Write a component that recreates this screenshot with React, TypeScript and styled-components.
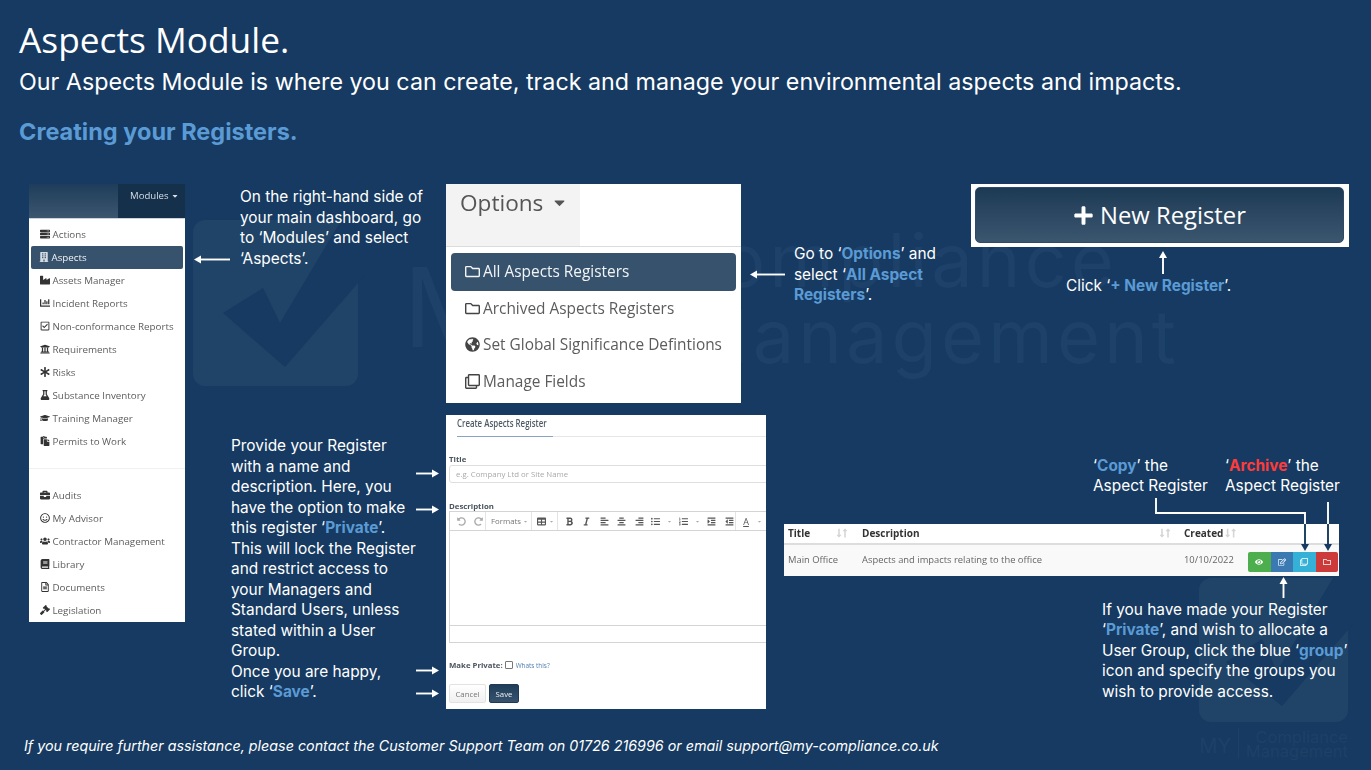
import styled, { createGlobalStyle } from "styled-components";
import type { ReactNode } from "react";
import {
  FaAlignCenter,
  FaAlignLeft,
  FaAlignRight,
  FaAsterisk,
  FaBold,
  FaBook,
  FaBriefcase,
  FaCaretDown,
  FaEye,
  FaFlask,
  FaGavel,
  FaGlobeAmericas,
  FaGraduationCap,
  FaIndent,
  FaIndustry,
  FaItalic,
  FaListOl,
  FaListUl,
  FaLongArrowAltDown,
  FaLongArrowAltUp,
  FaOutdent,
  FaPaste,
  FaPlus,
  FaRedoAlt,
  FaRegCheckSquare,
  FaRegClone,
  FaRegEdit,
  FaRegFileAlt,
  FaRegFolder,
  FaRegSmile,
  FaServer,
  FaTable,
  FaUndoAlt,
  FaUniversity,
  FaUsers,
  FaChartBar,
  FaBuilding,
} from "react-icons/fa";

const GlobalStyle = createGlobalStyle`
  html, body {
    margin: 0;
    padding: 0;
    background: #163a61;
  }
`;

const Slide = styled.div`
  position: relative;
  isolation: isolate;
  width: 1371px;
  height: 770px;
  overflow: hidden;
  background: #163a61;
  color: #fff;
  font-family: Inter, "Liberation Sans", sans-serif;
`;

/* ---- background watermark ---- */
const MarkSvg = styled.svg`
  position: absolute;
  left: 0;
  top: 0;
  z-index: -1;
`;
const WatermarkLine = styled.div<{ $right: number; $y: number; $size: number; $spacing?: number }>`
  position: absolute;
  z-index: -1;
  right: ${(p) => p.$right}px;
  top: ${(p) => p.$y}px;
  font-size: ${(p) => p.$size}px;
  letter-spacing: ${(p) => p.$spacing ?? 0}px;
  line-height: 1;
  white-space: nowrap;
  color: #1d4168;
`;
const WatermarkDivider = styled.div`
  position: absolute;
  z-index: -1;
  left: 1238px;
  top: 728px;
  width: 1px;
  height: 30px;
  background: #1d4168;
`;

/* ---- header ---- */
const Header = styled.header`
  height: 184px;
  padding: 18px 0 0 19px;
  box-sizing: border-box;
`;
const Title = styled.h1`
  margin: 0;
  font-size: 35.3px;
  font-weight: 400;
  line-height: 42px;
  font-family: "Open Sans", sans-serif;
`;
const Subtitle = styled.p`
  margin: 1px 0 0;
  font-size: 23.28px;
  font-weight: 400;
  line-height: 42px;
`;
const SectionHeading = styled.h2`
  margin: 13px 0 0;
  font-size: 23.5px;
  font-weight: 700;
  line-height: 32px;
  color: #5b9bd5;
`;

/* ---- layout ---- */
const Board = styled.main`
  display: grid;
  grid-template-columns: 156px 261px 320px 605px;
  padding-left: 29px;
  height: 525px;
`;
const Column = styled.div`
  display: flex;
  flex-direction: column;
  align-items: flex-start;
`;
const Note = styled.p<{ $left?: number; $top?: number; $width?: number }>`
  margin: ${(p) => p.$top ?? 0}px 0 0 ${(p) => p.$left ?? 0}px;
  ${(p) => (p.$width ? `width: ${p.$width}px;` : "")}
  font-size: 15.4px;
  line-height: 20.5px;
  white-space: nowrap;
`;
const Hi = styled.b`
  color: #5b9bd5;
  font-weight: 700;
`;
const Danger = styled.b`
  color: #ff3b3b;
  font-weight: 700;
`;
const Footer = styled.footer`
  margin-top: 27px;
  padding-left: 24px;
  font-size: 14.3px;
  line-height: 20px;
  font-style: italic;
`;

/* ---- modules screenshot ---- */
const ModulesShot = styled.div`
  width: 156px;
  height: 438px;
  background: #fff;
  font-family: "Open Sans", sans-serif;
  filter: blur(0.3px);
`;
const ModulesBar = styled.div`
  display: flex;
  justify-content: flex-end;
  height: 34px;
  border-bottom: 1px solid #ccd3da;
  background: linear-gradient(#1f3d5a, #3b566f);
`;
const ModulesTab = styled.div`
  display: flex;
  align-items: flex-start;
  gap: 2px;
  width: 67px;
  box-sizing: border-box;
  padding: 5px 0 0 12px;
  background: #15304b;
  color: #d8dfe6;
  font-size: 9.6px;
  line-height: 14px;
  svg {
    margin-top: 3px;
    font-size: 8px;
  }
`;
const ModuleList = styled.ul`
  list-style: none;
  margin: 0;
  padding: 3.5px 2px 0;
`;
const ModuleItem = styled.li<{ $active?: boolean }>`
  display: flex;
  align-items: center;
  gap: 2.5px;
  height: 23px;
  box-sizing: border-box;
  padding-left: ${(p) => (p.$active ? 8 : 9)}px;
  border-radius: 2px;
  font-size: 9.8px;
  white-space: nowrap;
  background: ${(p) => (p.$active ? "#37526d" : "transparent")};
  color: ${(p) => (p.$active ? "#f0f3f6" : "#5c5c5c")};
  svg {
    flex: none;
    font-size: 10px;
    color: ${(p) => (p.$active ? "#d4dbe2" : "#333")};
  }
`;
const ModuleDivider = styled.li`
  height: 1px;
  margin: 15px -2px 15px;
  background: #f0f0f0;
`;

/* ---- options screenshot ---- */
const OptionsShot = styled.div`
  width: 295px;
  height: 219px;
  background: #fff;
  margin-bottom: 12px;
  font-family: "Open Sans", sans-serif;
  filter: blur(0.3px);
`;
const OptionsTabBar = styled.div`
  height: 62px;
  border-bottom: 1px solid #dcdcdc;
`;
const OptionsTab = styled.div`
  display: flex;
  align-items: flex-start;
  gap: 8px;
  width: 134px;
  height: 62px;
  box-sizing: border-box;
  padding: 2px 0 0 14px;
  background: #f3f3f3;
  color: #555;
  font-size: 22.6px;
  line-height: 34px;
  svg {
    margin-top: 8px;
    font-size: 17px;
  }
`;
const OptionsList = styled.ul`
  list-style: none;
  margin: 5.5px 5px 0;
  padding: 0;
`;
const OptionItem = styled.li<{ $active?: boolean }>`
  display: flex;
  align-items: center;
  gap: 3px;
  height: ${(p) => (p.$active ? 38 : 36.3)}px;
  box-sizing: border-box;
  padding-left: 14px;
  border-radius: 4px;
  font-size: 15.4px;
  white-space: nowrap;
  background: ${(p) => (p.$active ? "#37526d" : "transparent")};
  color: ${(p) => (p.$active ? "#f2f4f6" : "#5c5c5c")};
  svg {
    flex: none;
    font-size: 15px;
    color: ${(p) => (p.$active ? "#f2f4f6" : "#444")};
  }
`;

/* ---- create register form screenshot ---- */
const FormShot = styled.div`
  width: 320px;
  height: 294px;
  overflow: hidden;
  box-sizing: border-box;
  padding-left: 3px;
  background: #fff;
  color: #555;
  font-family: "Open Sans", sans-serif;
  filter: blur(0.3px);
`;
const FormTabs = styled.div`
  margin-left: 8px;
  height: 21px;
  border-bottom: 1px solid #e6e6e6;
`;
const FormTab = styled.div`
  width: 96px;
  height: 21px;
  box-sizing: content-box;
  border-bottom: 1px solid #8ba4bf;
`;
const FormTabLabel = styled.span`
  display: block;
  width: 120px;
  transform: scaleX(0.75);
  transform-origin: left center;
  font-size: 10.5px;
  font-weight: 600;
  line-height: 17px;
  color: #4d5a66;
  white-space: nowrap;
`;
const FieldLabel = styled.div<{ $top: number }>`
  margin-top: ${(p) => p.$top}px;
  font-size: 7.8px;
  font-weight: 700;
  line-height: 10px;
  color: #4a5560;
`;
const TitleInput = styled.div`
  width: 340px;
  height: 18px;
  margin-top: 1px;
  box-sizing: border-box;
  padding-left: 6px;
  border: 1px solid #dedede;
  border-radius: 3px;
  font-size: 7.8px;
  line-height: 16px;
  color: #a9a9a9;
`;
const Editor = styled.div`
  width: 340px;
  box-sizing: border-box;
  border: 1px solid #d4d4d4;
`;
const EditorToolbar = styled.div`
  display: flex;
  height: 18px;
  border-bottom: 1px solid #d4d4d4;
  color: #555;
`;
const ToolGroup = styled.div<{ $width: number }>`
  display: flex;
  align-items: center;
  flex: none;
  width: ${(p) => p.$width}px;
  box-sizing: border-box;
  padding-left: 3px;
  border-right: 1px solid #e4e4e4;
  font-size: 7.8px;
  color: #777;
  gap: 1px;
`;
const ToolButton = styled.span<{ $width?: number; $muted?: boolean; $faded?: boolean }>`
  display: inline-flex;
  align-items: center;
  justify-content: center;
  flex: none;
  width: ${(p) => p.$width ?? 16.5}px;
  font-size: ${(p) => (p.$muted ? 5 : 9)}px;
  color: ${(p) => (p.$muted ? "#aaa" : p.$faded ? "#aaa" : "#555")};
`;
const EditorBody = styled.div`
  height: 94px;
  border-bottom: 1px solid #d4d4d4;
`;
const EditorStatus = styled.div`
  height: 16px;
`;
const PrivateRow = styled.div`
  display: flex;
  align-items: center;
  gap: 2px;
  margin-top: 17px;
  height: 10px;
  font-size: 7.8px;
  font-weight: 700;
  color: #4a5560;
`;
const CheckBox = styled.span`
  width: 6px;
  height: 6px;
  border: 1px solid #777;
  border-radius: 1px;
`;
const WhatsThis = styled.span`
  margin-left: 1px;
  font-size: 6.4px;
  font-weight: 400;
  color: #4f7fb0;
`;
const FormButtons = styled.div`
  display: flex;
  gap: 3px;
  margin-top: 14px;
`;
const FormButton = styled.div<{ $primary?: boolean }>`
  display: flex;
  align-items: center;
  justify-content: center;
  width: ${(p) => (p.$primary ? 30 : 37)}px;
  height: 19px;
  border-radius: 2px;
  font-size: 7.8px;
  border: 1px solid ${(p) => (p.$primary ? "#1d3b58" : "#e2e2e2")};
  box-sizing: border-box;
  background: ${(p) => (p.$primary ? "linear-gradient(#1f3d5a, #37526d)" : "linear-gradient(#fff, #f0f0f0)")};
  color: ${(p) => (p.$primary ? "#eef1f4" : "#777")};
`;

/* ---- right hand column ---- */
const TopRow = styled.div`
  display: flex;
  padding-left: 28px;
`;
const RegisterBlock = styled.div`
  display: flex;
  flex-direction: column;
  align-items: flex-start;
`;
const RegisterShot = styled.div`
  width: 378px;
  height: 63px;
  box-sizing: border-box;
  padding: 3px 5px 4px 4px;
  background: #fff;
  font-family: "Open Sans", sans-serif;
`;
const RegisterButton = styled.div`
  display: flex;
  align-items: center;
  justify-content: center;
  gap: 6px;
  height: 100%;
  border-radius: 5px;
  border: 1px solid #2e4a66;
  box-sizing: border-box;
  background: linear-gradient(#1d3a54, #3b566f);
  color: #fff;
  font-size: 23.8px;
  svg {
    font-size: 21px;
  }
`;
const CalloutRow = styled.div`
  display: grid;
  grid-template-columns: 132px auto;
  margin: 150px 0 0 327px;
`;
const RegisterTable = styled.div`
  width: 555px;
  margin: 27px 0 0 18px;
  background: #fff;
  font-family: "Open Sans", sans-serif;
  filter: blur(0.25px);
`;
const TableHead = styled.div`
  display: grid;
  grid-template-columns: 74px 322px 64px 95px;
  height: 21px;
  box-sizing: border-box;
  border-bottom: 2px solid #ddd;
  align-items: center;
  font-size: 10px;
  font-weight: 700;
  color: #333;
`;
const HeadCell = styled.div<{ $sort: number }>`
  display: flex;
  align-items: center;
  padding-left: 4px;
  padding-right: ${(p) => p.$sort}px;
  svg {
    font-size: 10px;
    color: #d5d5d5;
    margin-left: -4px;
  }
  svg:first-of-type {
    margin-left: auto;
  }
`;
const TableBody = styled.div`
  display: grid;
  grid-template-columns: 74px 322px 64px 95px;
  height: 31px;
  align-items: center;
  background: #f9f9f9;
  font-size: 9.4px;
  color: #666;
`;
const BodyCell = styled.div`
  padding: 0 0 2px 4px;
  white-space: nowrap;
`;
const ActionGroup = styled.div`
  display: flex;
  width: 90px;
  height: 20px;
  margin: 4px 0 0 4px;
  border-radius: 2px;
  overflow: hidden;
`;
const ActionButton = styled.div<{ $color: string }>`
  display: flex;
  align-items: center;
  justify-content: center;
  flex: 1;
  background: ${(p) => p.$color};
  color: #fff;
  font-size: 8px;
`;

/* ---- annotation arrows ---- */
const Arrows = styled.svg`
  position: absolute;
  left: 0;
  top: 0;
  pointer-events: none;
`;

const NAVY = "#163a61";

function ArrowLine({ d, head, color = "#fff" }: { d: string; head: string; color?: string }) {
  return (
    <>
      <path d={d} fill="none" stroke={color} strokeWidth={1.9} />
      <polygon points={head} fill={color} />
    </>
  );
}

function HeadSort({ sort, children }: { sort: number; children: ReactNode }) {
  return (
    <HeadCell $sort={sort}>
      {children}
      <FaLongArrowAltDown />
      <FaLongArrowAltUp />
    </HeadCell>
  );
}

const modulesTop = [
  { icon: <FaServer />, label: "Actions" },
  { icon: <FaBuilding />, label: "Aspects", active: true },
  { icon: <FaIndustry />, label: "Assets Manager" },
  { icon: <FaChartBar />, label: "Incident Reports" },
  { icon: <FaRegCheckSquare />, label: "Non-conformance Reports" },
  { icon: <FaUniversity />, label: "Requirements" },
  { icon: <FaAsterisk />, label: "Risks" },
  { icon: <FaFlask />, label: "Substance Inventory" },
  { icon: <FaGraduationCap />, label: "Training Manager" },
  { icon: <FaPaste />, label: "Permits to Work" },
];

const modulesBottom = [
  { icon: <FaBriefcase />, label: "Audits" },
  { icon: <FaRegSmile />, label: "My Advisor" },
  { icon: <FaUsers />, label: "Contractor Management" },
  { icon: <FaBook />, label: "Library" },
  { icon: <FaRegFileAlt />, label: "Documents" },
  { icon: <FaGavel />, label: "Legislation" },
];

const options = [
  { icon: <FaRegFolder />, label: "All Aspects Registers", active: true },
  { icon: <FaRegFolder />, label: "Archived Aspects Registers" },
  { icon: <FaGlobeAmericas />, label: "Set Global Significance Defintions" },
  { icon: <FaRegClone />, label: "Manage Fields" },
];

export default function App() {
  return (
    <Slide>
      <GlobalStyle />
      <MarkSvg width={1371} height={770} viewBox="0 0 1371 770">
        <rect x={193} y={220} width={165} height={166} rx={12} fill="#1f4468" />
        <polygon points="223,313 263,288 280,323 345,214 365,214 365,275 285,367" fill={NAVY} />
        <rect x={1199} y={578} width={149} height={144} rx={12} fill="#1f4468" />
        <polygon points="1226,662 1262,639 1277,671 1336,573 1354,573 1354,623 1282,706" fill={NAVY} />
      </MarkSvg>
      <WatermarkLine $right={794} $y={252} $size={110}>
        MY
      </WatermarkLine>
      <WatermarkLine $right={253} $y={223} $size={74} $spacing={4}>
        Compliance
      </WatermarkLine>
      <WatermarkLine $right={191} $y={299} $size={74} $spacing={4}>
        Management
      </WatermarkLine>
      <WatermarkLine $right={140} $y={736} $size={20}>
        MY
      </WatermarkLine>
      <WatermarkDivider />
      <WatermarkLine $right={23} $y={729} $size={16.5}>
        Compliance
      </WatermarkLine>
      <WatermarkLine $right={23} $y={743} $size={16.5}>
        Management
      </WatermarkLine>

      <Header>
        <Title>Aspects Module.</Title>
        <Subtitle>Our Aspects Module is where you can create, track and manage your environmental aspects and impacts.</Subtitle>
        <SectionHeading>Creating your Registers.</SectionHeading>
      </Header>

      <Board>
        <Column>
          <ModulesShot>
            <ModulesBar>
              <ModulesTab>
                Modules <FaCaretDown />
              </ModulesTab>
            </ModulesBar>
            <ModuleList>
              {modulesTop.map((m) => (
                <ModuleItem key={m.label} $active={m.active}>
                  {m.icon}
                  {m.label}
                </ModuleItem>
              ))}
              <ModuleDivider />
              {modulesBottom.map((m) => (
                <ModuleItem key={m.label}>
                  {m.icon}
                  {m.label}
                </ModuleItem>
              ))}
            </ModuleList>
          </ModulesShot>
        </Column>

        <Column>
          <Note $left={55} $top={3}>
            On the right-hand side of
            <br />
            your main dashboard, go
            <br />
            to ‘Modules’ and select
            <br />
            ‘Aspects’.
          </Note>
          <Note $left={46} $top={167}>
            Provide your Register
            <br />
            with a name and
            <br />
            description. Here, you
            <br />
            have the option to make
            <br />
            this register ‘<Hi>Private</Hi>’.
            <br />
            This will lock the Register
            <br />
            and restrict access to
            <br />
            your Managers and
            <br />
            Standard Users, unless
            <br />
            stated within a User
            <br />
            Group.
            <br />
            Once you are happy,
            <br />
            click ‘<Hi>Save</Hi>’.
          </Note>
        </Column>

        <Column>
          <OptionsShot>
            <OptionsTabBar>
              <OptionsTab>
                Options <FaCaretDown />
              </OptionsTab>
            </OptionsTabBar>
            <OptionsList>
              {options.map((o) => (
                <OptionItem key={o.label} $active={o.active}>
                  {o.icon}
                  {o.label}
                </OptionItem>
              ))}
            </OptionsList>
          </OptionsShot>

          <FormShot>
            <FormTabs>
              <FormTab>
                <FormTabLabel>Create Aspects Register</FormTabLabel>
              </FormTab>
            </FormTabs>
            <FieldLabel $top={17}>Title</FieldLabel>
            <TitleInput>e.g. Company Ltd or Site Name</TitleInput>
            <FieldLabel $top={18}>Description</FieldLabel>
            <Editor>
              <EditorToolbar>
                <ToolGroup $width={36}>
                  <ToolButton $width={16} $faded>
                    <FaUndoAlt />
                  </ToolButton>
                  <ToolButton $width={16} $faded>
                    <FaRedoAlt />
                  </ToolButton>
                </ToolGroup>
                <ToolGroup $width={46}>
                  &nbsp;Formats
                  <ToolButton $width={8} $muted>
                    <FaCaretDown />
                  </ToolButton>
                </ToolGroup>
                <ToolGroup $width={26}>
                  <ToolButton $width={12}>
                    <FaTable />
                  </ToolButton>
                  <ToolButton $width={6} $muted>
                    <FaCaretDown />
                  </ToolButton>
                </ToolGroup>
                <ToolGroup $width={178}>
                  <ToolButton>
                    <FaBold />
                  </ToolButton>
                  <ToolButton>
                    <FaItalic />
                  </ToolButton>
                  <ToolButton>
                    <FaAlignLeft />
                  </ToolButton>
                  <ToolButton>
                    <FaAlignCenter />
                  </ToolButton>
                  <ToolButton>
                    <FaAlignRight />
                  </ToolButton>
                  <ToolButton $width={14}>
                    <FaListUl />
                  </ToolButton>
                  <ToolButton $width={12} $muted>
                    <FaCaretDown />
                  </ToolButton>
                  <ToolButton $width={14}>
                    <FaListOl />
                  </ToolButton>
                  <ToolButton $width={11} $muted>
                    <FaCaretDown />
                  </ToolButton>
                  <ToolButton>
                    <FaIndent />
                  </ToolButton>
                  <ToolButton>
                    <FaOutdent />
                  </ToolButton>
                </ToolGroup>
                <ToolGroup $width={40}>
                  <ToolButton $width={14}>
                    <u>A</u>
                  </ToolButton>
                  <ToolButton $width={10} $muted>
                    <FaCaretDown />
                  </ToolButton>
                </ToolGroup>
              </EditorToolbar>
              <EditorBody />
              <EditorStatus />
            </Editor>
            <PrivateRow>
              Make Private: <CheckBox /> <WhatsThis>Whats this?</WhatsThis>
            </PrivateRow>
            <FormButtons>
              <FormButton>Cancel</FormButton>
              <FormButton $primary>Save</FormButton>
            </FormButtons>
          </FormShot>
        </Column>

        <Column>
          <TopRow>
            <Note $top={60} $width={177}>
              Go to ‘<Hi>Options</Hi>’ and
              <br />
              select ‘<Hi>All Aspect</Hi>
              <br />
              <Hi>Registers</Hi>’.
            </Note>
            <RegisterBlock>
              <RegisterShot>
                <RegisterButton>
                  <FaPlus /> New Register
                </RegisterButton>
              </RegisterShot>
              <Note $left={95} $top={29}>
                Click ‘<Hi>+ New Register</Hi>’.
              </Note>
            </RegisterBlock>
          </TopRow>

          <CalloutRow>
            <Note>
              ‘<Hi>Copy</Hi>’ the
              <br />
              Aspect Register
            </Note>
            <Note>
              ‘<Danger>Archive</Danger>’ the
              <br />
              Aspect Register
            </Note>
          </CalloutRow>

          <RegisterTable>
            <TableHead>
              <HeadSort sort={8}>Title</HeadSort>
              <HeadSort sort={7}>Description</HeadSort>
              <HeadSort sort={6}>Created</HeadSort>
              <div />
            </TableHead>
            <TableBody>
              <BodyCell>Main Office</BodyCell>
              <BodyCell>Aspects and impacts relating to the office</BodyCell>
              <BodyCell>10/10/2022</BodyCell>
              <ActionGroup>
                <ActionButton $color="#4cae4c">
                  <FaEye />
                </ActionButton>
                <ActionButton $color="#3b79b3">
                  <FaRegEdit />
                </ActionButton>
                <ActionButton $color="#35b1d8">
                  <FaRegClone />
                </ActionButton>
                <ActionButton $color="#cc3a3a">
                  <FaRegFolder />
                </ActionButton>
              </ActionGroup>
            </TableBody>
          </RegisterTable>

          <Note $left={336} $top={24}>
            If you have made your Register
            <br />
            ‘<Hi>Private</Hi>’, and wish to allocate a
            <br />
            User Group, click the blue ‘<Hi>group</Hi>’
            <br />
            icon and specify the groups you
            <br />
            wish to provide access.
          </Note>
        </Column>
      </Board>

      <Footer>If you require further assistance, please contact the Customer Support Team on 01726 216996 or email support@my-compliance.co.uk</Footer>

      <Arrows width={1371} height={770} viewBox="0 0 1371 770">
        <ArrowLine d="M230 259.5H198" head="194,259.5 201,255.5 201,263.5" />
        <ArrowLine d="M785 274.5H754" head="750,274.5 757,270.5 757,278.5" />
        <ArrowLine d="M1163 274V256" head="1163,251 1159,258 1167,258" />
        <ArrowLine d="M416 473.5H434" head="439,473.5 432,469.5 432,477.5" />
        <ArrowLine d="M416 509.5H434" head="439,509.5 432,505.5 432,513.5" />
        <ArrowLine d="M416 670.5H434" head="439,670.5 432,666.5 432,674.5" />
        <ArrowLine d="M416 693.5H434" head="439,693.5 432,689.5 432,697.5" />
        <path d="M1156 498V513H1305V524" fill="none" stroke="#fff" strokeWidth={1.9} />
        <ArrowLine d="M1305 524V546" head="1305,551 1301,544 1309,544" color={NAVY} />
        <path d="M1328 502V524" fill="none" stroke="#fff" strokeWidth={1.9} />
        <ArrowLine d="M1328 524V546" head="1328,551 1324,544 1332,544" color={NAVY} />
        <ArrowLine d="M1283.5 598V582" head="1283.5,577 1279.5,584 1287.5,584" />
      </Arrows>
    </Slide>
  );
}
